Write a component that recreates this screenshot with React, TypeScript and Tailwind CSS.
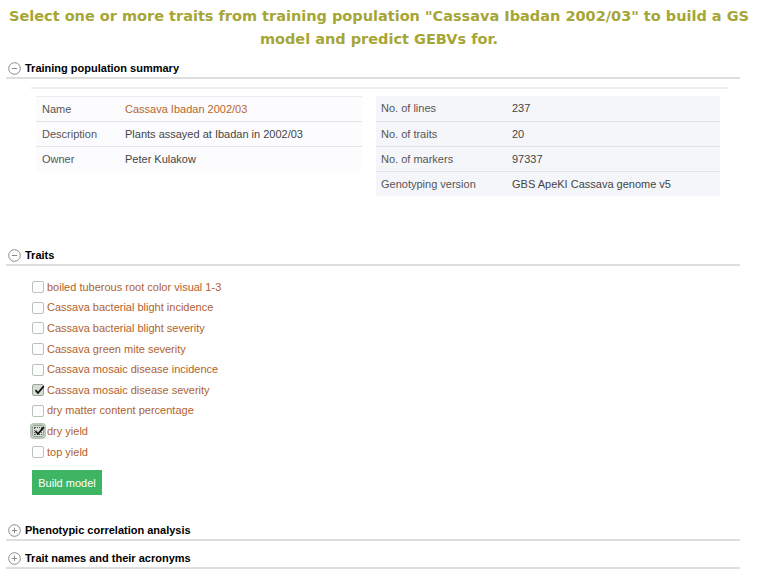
import React from "react";

const Circle = ({ plus }: { plus?: boolean }) => (
  <svg width="13" height="13" viewBox="0 0 13 13" className="shrink-0">
    <circle cx="6.5" cy="6.5" r="5.8" fill="#fff" stroke="#8a8a8a" strokeWidth="1" />
    <line x1="3.8" y1="6.5" x2="9.2" y2="6.5" stroke="#8a8a8a" strokeWidth="1" />
    {plus && <line x1="6.5" y1="3.8" x2="6.5" y2="9.2" stroke="#8a8a8a" strokeWidth="1" />}
  </svg>
);

const Header = ({ title, plus }: { title: string; plus?: boolean }) => (
  <div className="ml-[6px] mr-[18px] flex h-[20px] items-center gap-[4px] border-b-2 border-[#dedede] pl-[2px]">
    <Circle plus={plus} />
    <span
      className="text-[11px] font-bold leading-[16px] text-black"
      style={{ fontFamily: '"Liberation Sans Narrow", "Liberation Sans", Arial, sans-serif' }}
    >
      {title}
    </span>
  </div>
);

const Check = ({ checked, focus }: { checked?: boolean; focus?: boolean }) => (
  <span
    className={
      "relative inline-flex h-[12px] w-[12px] shrink-0 items-center justify-center rounded-[2px] border " +
      (checked ? "border-[#9aa89a] bg-[#d7dcd7]" : "border-[#b9c4b9] bg-[#fcfdfc]") +
      (focus ? " outline outline-2 outline-[#b8c9b8]" : "")
    }
  >
    {focus && <span className="absolute inset-[1px] border border-dotted border-[#555]" />}
    {checked && (
      <svg width="11" height="10" viewBox="0 0 11 10" className="absolute left-[1px] top-[0px]">
        <path d="M1.5 5.2 L4 8 L9.8 1.2" fill="none" stroke="#111" strokeWidth="1.8" />
      </svg>
    )}
  </span>
);

const traits: { name: string; checked?: boolean; focus?: boolean }[] = [
  { name: "boiled tuberous root color visual 1-3" },
  { name: "Cassava bacterial blight incidence" },
  { name: "Cassava bacterial blight severity" },
  { name: "Cassava green mite severity" },
  { name: "Cassava mosaic disease incidence" },
  { name: "Cassava mosaic disease severity", checked: true },
  { name: "dry matter content percentage" },
  { name: "dry yield", checked: true, focus: true },
  { name: "top yield" },
];

export default function App() {
  const sans = { fontFamily: '"Liberation Sans", Arial, sans-serif' };
  return (
    <div className="w-[758px] bg-white" style={sans}>
      <h1
        className="px-2 pt-[5px] text-center text-[14.5px] font-bold leading-[23px] text-[#a6a636]"
        style={{ fontFamily: '"DejaVu Sans", sans-serif' }}
      >
        Select one or more traits from training population "Cassava Ibadan 2002/03" to build a GS model and predict GEBVs for.
      </h1>

      <div className="mt-[8px]">
        <Header title="Training population summary" />
      </div>

      <div className="ml-[31px] mr-[30px] mt-[8px] border-t-2 border-[#ededed] pt-[7px]">
        <div className="flex items-start">
          <div className="ml-[5px] w-[326px] bg-[#fcfcfe]">
            {[
              ["Name", "Cassava Ibadan 2002/03", true],
              ["Description", "Plants assayed at Ibadan in 2002/03", false],
              ["Owner", "Peter Kulakow", false],
            ].map(([k, v, link], i) => (
              <div
                key={i}
                className={"flex h-[25px] items-center text-[11px] " + (i > 0 ? "border-t border-[#e4e4e4]" : "border-t border-[#ececec]")}
              >
                <span className="w-[89px] pl-[6px] text-[#555]">{k}</span>
                <span className={link ? "text-[#b8662c]" : "text-[#444]"}>{v}</span>
              </div>
            ))}
          </div>
          <div className="ml-[14px] w-[344px] bg-[#f5f6fa]">
            {[
              ["No. of lines", "237"],
              ["No. of traits", "20"],
              ["No. of markers", "97337"],
              ["Genotyping version", "GBS ApeKI Cassava genome v5"],
            ].map(([k, v], i) => (
              <div
                key={i}
                className={"flex h-[25px] items-center text-[11px] " + (i > 0 ? "border-t border-[#e4e4e8]" : "")}
              >
                <span className="w-[136px] pl-[5px] text-[#555]">{k}</span>
                <span className="text-[#444]">{v}</span>
              </div>
            ))}
          </div>
        </div>
      </div>

      <div className="mt-[50px]">
        <Header title="Traits" />
      </div>

      <div className="ml-[32px] mt-[11px] flex flex-col">
        {traits.map((t, i) => (
          <label key={i} className="flex h-[20.6px] items-center gap-[3px] text-[11px] text-[#b0622e]">
            <Check checked={t.checked} focus={t.focus} />
            <span className="leading-none">{t.name}</span>
          </label>
        ))}
        <button className="mt-[8px] h-[25px] w-[70px] bg-[#3db563] text-[11px] text-white" style={sans}>
          Build model
        </button>
      </div>

      <div className="mt-[26px]">
        <Header title="Phenotypic correlation analysis" plus />
      </div>
      <div className="mt-[8px]">
        <Header title="Trait names and their acronyms" plus />
      </div>
    </div>
  );
}
